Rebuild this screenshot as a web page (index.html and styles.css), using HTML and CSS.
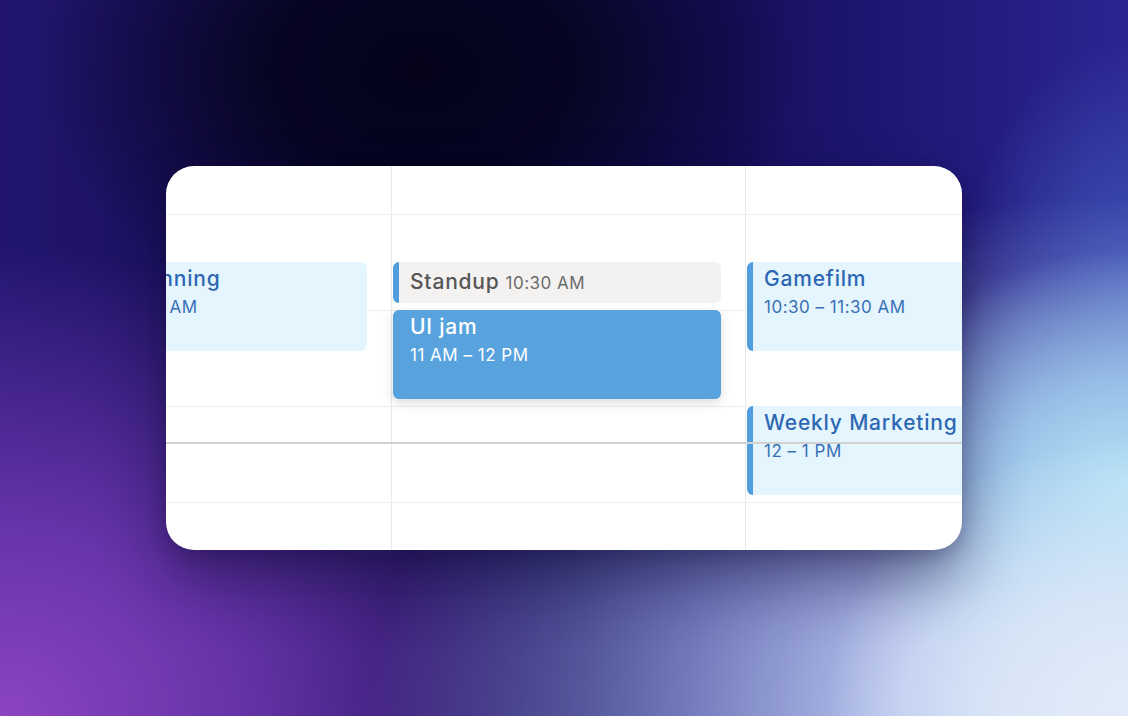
FILE: index.html
```html
<!DOCTYPE html>
<html lang="en">
<head>
<meta charset="utf-8">
<title>Calendar</title>
<link rel="stylesheet" href="styles.css">
</head>
<body>
<div class="stage">
  <div class="card">
    <div class="grid">
      <div class="col">
        <div class="event light r3 span2">
          <div class="title">Sprint Planning</div>
          <div class="time">10:30 – 11:30 AM</div>
        </div>
      </div>
      <div class="col">
        <div class="event gray r3 span1">
          <span class="title">Standup</span>
          <span class="time">10:30 AM</span>
        </div>
        <div class="event solid r4 span2">
          <div class="title">UI jam</div>
          <div class="time">11 AM – 12 PM</div>
        </div>
      </div>
      <div class="col">
        <div class="event light r3 span2">
          <div class="title">Gamefilm</div>
          <div class="time">10:30 – 11:30 AM</div>
        </div>
        <div class="event light r6 span2">
          <div class="title">Weekly Marketing</div>
          <div class="time">12 – 1 PM</div>
        </div>
      </div>
    </div>
    <div class="now-line"></div>
  </div>
</div>
</body>
</html>
```

FILE: styles.css
```css
html, body {
  margin: 0;
  padding: 0;
  width: 1128px;
  height: 716px;
  overflow: hidden;
}

body {
  font-family: "Inter", "Noto Sans", sans-serif;
  background:
    radial-gradient(ellipse 380px 270px at 420px 70px, #04031a 0%, rgba(4,3,26,0.85) 40%, rgba(4,3,26,0) 100%),
    radial-gradient(ellipse 300px 260px at 1128px 700px, #e2ebf9 0%, rgba(222,233,248,0.8) 45%, rgba(210,225,246,0) 100%),
    radial-gradient(ellipse 280px 240px at 1128px 490px, #b2e2f6 0%, rgba(165,215,243,0.75) 45%, rgba(120,170,225,0) 100%),
    radial-gradient(ellipse 760px 520px at 1128px 716px, #d4e0f6 0%, #b8c6ee 30%, rgba(125,135,200,0.85) 60%, rgba(80,80,160,0) 100%),
    radial-gradient(ellipse 170px 260px at 1128px 300px, rgba(70,100,195,0.8) 0%, rgba(60,80,180,0) 100%),
    radial-gradient(ellipse 600px 470px at 0px 716px, #8c44c0 0%, rgba(120,60,185,0.8) 40%, rgba(80,40,160,0) 100%),
    linear-gradient(to right, #21156e 0%, #150d52 35%, #170f5e 65%, #2a2492 100%);
}

.stage {
  width: 1128px;
  height: 716px;
  display: flex;
  align-items: center;
  justify-content: center;
}

.card {
  position: relative;
  width: 796px;
  height: 384px;
  background: #ffffff;
  border-radius: 28px;
  overflow: hidden;
  box-shadow: 0 30px 60px rgba(14, 12, 50, 0.45), 0 6px 18px rgba(14, 12, 50, 0.2);
}

.grid {
  display: flex;
  margin-left: -129px;
  height: 384px;
  background-image: repeating-linear-gradient(to bottom,
    transparent 0px, transparent 48px,
    #efefef 48px, #efefef 49px,
    transparent 49px, transparent 96px);
}

.col {
  flex: 0 0 354px;
  box-sizing: border-box;
  border-left: 1px solid #eaeaea;
  display: grid;
  grid-template-rows: repeat(8, 48px);
  padding: 0 24px 0 1px;
}

.event {
  grid-column: 1;
  margin-bottom: 7px;
  border-radius: 6px;
  box-sizing: border-box;
  padding: 5px 10px 0 11px;
  border-left: 6px solid #4f9ddc;
  overflow: hidden;
  white-space: nowrap;
}

.r3 { grid-row-start: 3; }
.r4 { grid-row-start: 4; }
.r6 { grid-row-start: 6; }
.span1 { grid-row-end: span 1; }
.span2 { grid-row-end: span 2; }

.title {
  font-size: 21px;
  line-height: 24px;
  font-weight: 500;
  letter-spacing: 0.8px;
}

.time {
  margin-top: 6px;
  font-size: 17px;
  line-height: 20px;
  letter-spacing: 0.5px;
}

.light {
  background: #e4f5fd;
  color: #2d67b3;
}

.light .time {
  color: #3a70b6;
}

.gray {
  background: #f3f2f1;
  color: #565656;
  display: flex;
  align-items: baseline;
  gap: 6px;
  padding-top: 8px;
}

.gray .time {
  margin-top: 0;
  color: #6b6b6b;
}

.solid {
  background: #58a3de;
  border-left-color: #58a3de;
  color: #ffffff;
  box-shadow: 0 4px 12px rgba(0, 0, 0, 0.14);
}

.now-line {
  position: absolute;
  left: 0;
  right: 0;
  top: 276px;
  height: 2px;
  background: #d2d2d2;
}
```
